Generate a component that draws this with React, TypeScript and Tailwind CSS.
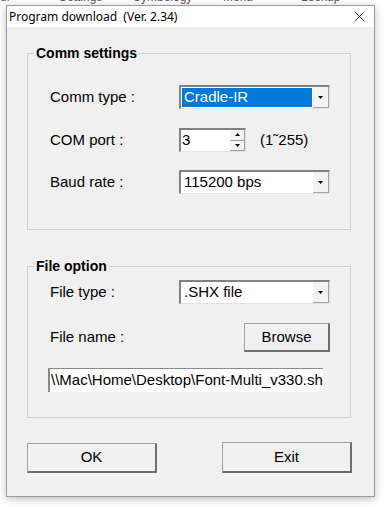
import type { ReactNode } from 'react'

const font = { fontFamily: '"Liberation Sans", Arial, sans-serif' }

function Arrow({ up = false }: { up?: boolean }) {
    return (
        <svg width="5" height="3" viewBox="0 0 5 3" className={up ? 'rotate-180' : ''}>
            <path d="M0 0H5L2.5 3Z" fill="#000" />
        </svg>
    )
}

function Combo({ value, selected = false }: { value: string; selected?: boolean }) {
    return (
        <div className="flex w-[151px] h-[24px] bg-white border-t-2 border-l-2 border-[#828282] border-r border-b border-r-[#e3e3e3] border-b-[#e3e3e3]">
            <div className="flex-1 p-[1px] flex">
                <div className={`flex-1 flex items-center pl-[2px] text-[15px] ${selected ? 'bg-[#0078d7] text-white' : 'text-black'}`}>
                    {value}
                </div>
            </div>
            <div className="w-[16px] flex items-center justify-center bg-[#f4f4f4] border-r border-b border-[#a0a0a0]">
                <Arrow />
            </div>
        </div>
    )
}

function Button({ children, className }: { children: ReactNode; className: string }) {
    return (
        <div className={`flex items-center justify-center bg-[#f0f0f0] text-[15px] text-black border-t border-l border-[#a0a0a0] border-r-2 border-b-2 border-r-[#6e6e6e] border-b-[#6e6e6e] ${className}`}>
            {children}
        </div>
    )
}

function Group({ title, children, className }: { title: string; children: ReactNode; className: string }) {
    return (
        <div className={`ml-[20px] w-[324px] border border-[#d0d0d0] ${className}`}>
            <div className="-mt-[11px] h-[20px] flex">
                <span className="ml-[6px] px-[2px] bg-[#f0f0f0] text-[14px] font-bold leading-[20px] text-black">{title}</span>
            </div>
            {children}
        </div>
    )
}

function Row({ label, children, className }: { label: string; children: ReactNode; className: string }) {
    return (
        <div className={`flex items-center pl-[22px] ${className}`}>
            <div className="w-[129px] text-[15px] text-black">{label}</div>
            {children}
        </div>
    )
}

export default function App() {
    return (
        <div className="w-[384px] h-[507px] bg-white overflow-hidden" style={font}>
            {/* menu of the window behind, mostly hidden */}
            <div className="h-[5px] overflow-hidden">
                <div className="-mt-[10px] flex text-[12px] leading-[14px] text-[#555]">
                    <span className="w-[59px]">ur</span>
                    <span className="w-[74px]">Settings</span>
                    <span className="w-[90px]">Symbology</span>
                    <span className="w-[78px]">Menu</span>
                    <span>Lookup</span>
                </div>
            </div>

            <div className="ml-[6px] w-[369px] h-[492px] flex flex-col border border-[#9a9a9a] shadow-[0_2px_8px_rgba(0,0,0,0.25)]">
                <div className="h-[21px] bg-white flex items-center justify-between pl-[2px] pr-[9px]">
                    <span className="text-[12px] text-black" style={{ fontFamily: '"Noto Sans", "Open Sans", sans-serif' }}>
                        Program download&nbsp;&nbsp;(Ver. 2.34)
                    </span>
                    <svg width="11" height="11" viewBox="0 0 11 11">
                        <path d="M0.5 0.5L10.5 10.5M10.5 0.5L0.5 10.5" stroke="#333" strokeWidth="0.9" />
                    </svg>
                </div>

                <div className="flex-1 bg-[#f0f0f0]">
                    <Group title="Comm settings" className="mt-[26px] pb-[35px]">
                        <Row label="Comm type :" className="mt-[22px]">
                            <Combo value="Cradle-IR" selected />
                        </Row>
                        <Row label="COM port :" className="mt-[19px]">
                            <div className="flex w-[67px] h-[24px] bg-white border-t-2 border-l-2 border-[#828282] border-r border-b border-r-[#e3e3e3] border-b-[#e3e3e3]">
                                <div className="flex-1 flex items-center pl-[1px] text-[15px]">3</div>
                                <div className="w-[15px] flex flex-col">
                                    <div className="flex-1 flex items-center justify-center bg-[#f4f4f4] border-r border-b border-[#a0a0a0]">
                                        <Arrow up />
                                    </div>
                                    <div className="flex-1 flex items-center justify-center bg-[#f4f4f4] border-r border-b border-[#a0a0a0]">
                                        <Arrow />
                                    </div>
                                </div>
                            </div>
                            <span className="ml-[14px] text-[15px] text-black">(1˜255)</span>
                        </Row>
                        <Row label="Baud rate :" className="mt-[18px]">
                            <Combo value="115200 bps" />
                        </Row>
                    </Group>

                    <Group title="File option" className="mt-[36px] pb-[25px]">
                        <Row label="File type :" className="mt-[4px]">
                            <Combo value=".SHX file" />
                        </Row>
                        <Row label="File name :" className="mt-[19px]">
                            <Button className="ml-[65px] w-[86px] h-[29px]">Browse</Button>
                        </Row>
                        <div className="mt-[16px] ml-[20px] w-[275px] h-[24px] bg-white border-t border-l-2 border-[#8a8a8a] flex items-center pl-[1px] overflow-hidden whitespace-nowrap text-[15px] text-black">
                            \\Mac\Home\Desktop\Font-Multi_v330.sh
                        </div>
                    </Group>

                    <div className="mt-[25px] ml-[20px] w-[325px] flex justify-between">
                        <Button className="w-[130px] h-[30px]">OK</Button>
                        <Button className="w-[130px] h-[31px] -mt-[1px]">Exit</Button>
                    </div>
                </div>
            </div>
        </div>
    )
}
